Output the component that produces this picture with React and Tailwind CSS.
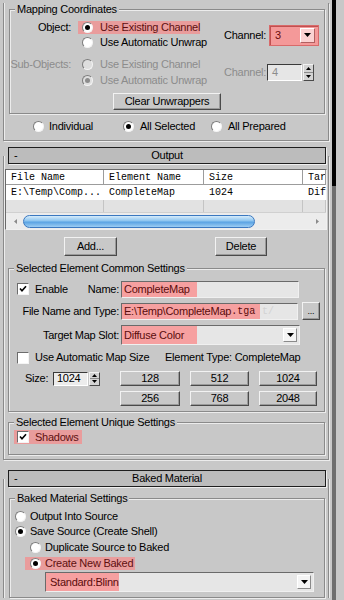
import React from "react";
import clsx from "clsx";

// 3ds Max "Render To Texture" rollouts, classic gray UI
const HL = "bg-[#e99c9c] text-[#5e1010]";
const FIELD_HL = "bg-[#f6a0a0] text-[#5a0c0c]";

const Radio = ({ checked, disabled }) => (
  <span
    className={clsx(
      "inline-flex w-[11px] h-[11px] shrink-0 items-center justify-center rounded-full border border-t-[#7c7c7c] border-l-[#7c7c7c] border-r-[#f4f4f4] border-b-[#f4f4f4]",
      disabled ? "bg-[#dedede]" : "bg-white"
    )}
  >
    {checked && (
      <span className={clsx("w-[5px] h-[5px] rounded-full", disabled ? "bg-[#8c8c8c]" : "bg-black")} />
    )}
  </span>
);

const Checkbox = ({ checked }) => (
  <span className="inline-flex w-[12px] h-[12px] shrink-0 items-center justify-center border border-t-[#6c6c6c] border-l-[#6c6c6c] border-r-[#f4f4f4] border-b-[#f4f4f4] bg-white">
    {checked && (
      <svg width="8" height="8" viewBox="0 0 8 8">
        <path d="M1 3.5 L3 5.8 L7 1.2" fill="none" stroke="#000" strokeWidth="1.6" />
      </svg>
    )}
  </span>
);

const Group = ({ title, className, children }) => (
  <fieldset
    className={clsx(
      "border border-[#8a8a8a] shadow-[inset_1px_1px_0_#ececec,1px_1px_0_#ececec]",
      className
    )}
  >
    <legend className="ml-[5px] px-[2px] bg-[#c8c8c8] leading-[13px]">{title}</legend>
    {children}
  </fieldset>
);

const Button = ({ children, className }) => (
  <div
    className={clsx(
      "flex items-center justify-center bg-[#c8c8c8] border border-t-[#f2f2f2] border-l-[#f2f2f2] border-r-[#4a4a4a] border-b-[#4a4a4a] shadow-[inset_-1px_-1px_0_#9a9a9a]",
      className
    )}
  >
    {children}
  </div>
);

const DownTri = () => (
  <svg width="7" height="4" viewBox="0 0 7 4">
    <path d="M0 0 H7 L3.5 4 Z" fill="#000" />
  </svg>
);

const SpinArrows = () => (
  <div className="ml-[1px] flex h-full w-[11px] flex-col border border-t-[#f2f2f2] border-l-[#f2f2f2] border-r-[#4a4a4a] border-b-[#4a4a4a] bg-[#d4d4d4]">
    <div className="flex flex-1 items-center justify-center border-b border-[#8a8a8a]">
      <svg width="5" height="3" viewBox="0 0 5 3"><path d="M0 3 H5 L2.5 0 Z" fill="#000" /></svg>
    </div>
    <div className="flex flex-1 items-center justify-center">
      <svg width="5" height="3" viewBox="0 0 5 3"><path d="M0 0 H5 L2.5 3 Z" fill="#000" /></svg>
    </div>
  </div>
);

const Header = ({ title }) => (
  <div className="ml-[8px] grid h-[17px] w-[318px] grid-cols-[20px_1fr_20px] items-center border border-[#1e1e1e] bg-[#bcbcbc] shadow-[1px_1px_0_#eeeeee]">
    <span className="pl-[5px]">-</span>
    <span className="text-center">{title}</span>
    <span />
  </div>
);

const mono = "font-['Liberation_Mono','Courier_New',monospace] text-[10px] tracking-normal";

const OutputTable = () => {
  const cols = ["w-[98px]", "w-[100px]", "w-[99px]", "flex-1"];
  const head = ["File Name", "Element Name", "Size", "Tar"];
  const row = ["E:\\Temp\\Comp...", "CompleteMap", "1024", "Dif"];
  return (
    <div className={clsx("ml-[1px] flex h-[61px] w-[322px] flex-col border border-t-[#6a6a6a] border-l-[#6a6a6a] border-r-[#f0f0f0] border-b-[#f0f0f0] bg-white overflow-hidden", mono)}>
      <div className="flex h-[15px]">
        {head.map((h, i) => (
          <div key={h} className={clsx(cols[i], "flex items-center overflow-hidden pl-[5px] border-r border-b border-r-[#9c9c9c] border-b-[#9c9c9c] shadow-[inset_1px_1px_0_#fff]")}>
            {h}
          </div>
        ))}
      </div>
      <div className="flex h-[15px]">
        {row.map((c, i) => (
          <div key={i} className={clsx(cols[i], "flex items-center overflow-hidden pl-[5px]")}>
            {c}
          </div>
        ))}
      </div>
      <div className="flex h-[12px] bg-[#e2e2e2]">
        {cols.map((c, i) => (
          <div key={i} className={clsx(c, "border-r border-[#c4c4c4]")} />
        ))}
      </div>
      <div className="flex h-[17px] items-center bg-[#ececec] border-t border-[#d0d0d0] px-[2px]">
        <div className="flex w-[14px] items-center justify-center">
          <svg width="3" height="5" viewBox="0 0 3 5"><path d="M3 0 V5 L0 2.5 Z" fill="#8a8a8a" /></svg>
        </div>
        <div className="ml-[1px] h-[13px] w-[232px] rounded-[7px] border border-[#3b78c0] bg-[linear-gradient(#d6ecfb,#8cc4ef_45%,#5aa3e3_55%,#9ccdf3)]" />
        <div className="flex-1" />
        <div className="flex w-[14px] items-center justify-center">
          <svg width="3" height="5" viewBox="0 0 3 5"><path d="M0 0 V5 L3 2.5 Z" fill="#8a8a8a" /></svg>
        </div>
      </div>
    </div>
  );
};

export default function App() {
  return (
    <div className="flex h-[600px] w-[344px] overflow-hidden whitespace-nowrap bg-[#c8c8c8] text-[11px] leading-[13px] tracking-[-0.25px] text-black font-['Liberation_Sans',Arial,sans-serif]">
      <div className="w-[332px] shrink-0">
        {/* Top rollout (header scrolled out of view) */}
        <div className="ml-[3px] h-[138px] w-[326px] border-x border-b border-[#8a8a8a] shadow-[inset_1px_0_0_#ececec,1px_1px_0_#ececec]">
          <Group title="Mapping Coordinates" className="ml-[5px] mt-[3px] w-[316px] pb-[3px]">
            <div className="flex items-center pt-[4px]">
              <div className="flex w-[61px] justify-end self-start leading-[15px]">Object:</div>
              <div className="ml-[7px] flex w-[146px] flex-col">
                <div className="flex h-[15px] items-center">
                  <span className={clsx("flex h-[13px] w-[122px] items-center gap-[7px] pl-[4px]", HL)}>
                    <Radio checked />
                    Use Existing Channel
                  </span>
                </div>
                <div className="flex h-[15px] items-center gap-[7px] pl-[4px]">
                  <Radio />
                  Use Automatic Unwrap
                </div>
              </div>
              <span className="w-[45px]">Channel:</span>
              <div className="flex h-[21px] w-[50px] items-center border border-[#d86a6a] bg-[#f49999] shadow-[inset_1px_1px_0_#c05050] pl-[5px] pr-[3px] text-[#6a0c0c]">
                <span className="flex-1">3</span>
                <span className="flex h-[15px] w-[15px] items-center justify-center bg-[#fbd2d2] border border-t-white border-l-white border-r-[#b06060] border-b-[#b06060]">
                  <DownTri />
                </span>
              </div>
            </div>

            <div className="mt-[6px] flex items-center text-[#8c8c8c]">
              <div className="flex w-[61px] justify-end self-start leading-[16px]">Sub-Objects:</div>
              <div className="ml-[7px] flex w-[146px] flex-col">
                <div className="flex h-[16px] items-center gap-[7px] pl-[4px]">
                  <Radio disabled />
                  Use Existing Channel
                </div>
                <div className="flex h-[16px] items-center gap-[7px] pl-[4px]">
                  <Radio disabled checked />
                  Use Automatic Unwrap
                </div>
              </div>
              <span className="w-[43px]">Channel:</span>
              <div className="flex h-[17px] items-center">
                <div className="flex h-full w-[35px] items-center border border-t-[#3a3a3a] border-l-[#3a3a3a] border-r-white border-b-white bg-[#e6e6e6] pl-[4px]">4</div>
                <SpinArrows />
              </div>
            </div>

            <Button className="mx-auto mt-[5px] h-[17px] w-[108px]">Clear Unwrappers</Button>
          </Group>

          <div className="mt-[5px] flex h-[15px] items-center pl-[29px]">
            <div className="flex w-[90px] items-center gap-[5px]"><Radio />Individual</div>
            <div className="flex w-[88px] items-center gap-[6px]"><Radio checked />All Selected</div>
            <div className="flex items-center gap-[6px]"><Radio />All Prepared</div>
          </div>
        </div>

        {/* Output rollout */}
        <div className="mt-[6px]">
          <Header title="Output" />
          <div className="-mt-[8px] ml-[3px] w-[326px] border-x border-b border-[#8a8a8a] pt-[13px] pb-[4px] shadow-[inset_1px_0_0_#ececec,1px_1px_0_#ececec]">
            <OutputTable />

            <div className="mt-[7px] flex">
              <Button className="ml-[60px] h-[19px] w-[53px]">Add...</Button>
              <Button className="ml-[98px] h-[19px] w-[52px]">Delete</Button>
            </div>

            <Group title="Selected Element Common Settings" className="ml-[4px] mt-[6px] w-[317px] pb-[5px]">
              <div className="mt-[5px] flex h-[18px] items-center">
                <div className="flex w-[112px] items-center pl-[8px]">
                  <Checkbox checked />
                  <span className="ml-[6px]">Enable</span>
                  <span className="ml-auto pr-[2px]">Name:</span>
                </div>
                <div className="flex h-[17px] w-[178px] border border-t-[#6a6a6a] border-l-[#6a6a6a] border-r-[#f0f0f0] border-b-[#f0f0f0] bg-[#e6e6e6]">
                  <span className={clsx("flex w-[75px] items-center pl-[2px]", FIELD_HL)}>CompleteMap</span>
                </div>
              </div>

              <div className="mt-[4px] flex h-[18px] items-center">
                <div className="w-[112px] pr-[2px] text-right">File Name and Type:</div>
                <div className="flex h-[17px] w-[177px] items-center border border-t-[#6a6a6a] border-l-[#6a6a6a] border-r-[#f0f0f0] border-b-[#f0f0f0] bg-[#e6e6e6]">
                  <span className={clsx("flex h-full w-[138px] items-center pl-[2px]", FIELD_HL)}>
                    E:\Temp\CompleteMap<span className={mono}>.tga</span>
                  </span>
                  <span className={clsx(mono, "text-[#d2d2d2] pl-[2px]")}>t/</span>
                </div>
                <Button className="ml-[4px] h-[18px] w-[18px] items-end pb-[3px] text-[9px] leading-[9px]">...</Button>
              </div>

              <div className="mt-[5px] flex h-[20px] items-center">
                <div className="w-[112px] pr-[2px] text-right">Target Map Slot:</div>
                <div className="flex h-[20px] w-[179px] items-center border border-t-[#6a6a6a] border-l-[#6a6a6a] border-r-[#f0f0f0] border-b-[#f0f0f0] bg-[#e6e6e6] pr-[2px]">
                  <span className={clsx("flex h-full w-[75px] items-center pl-[2px]", FIELD_HL)}>Diffuse Color</span>
                  <span className="flex-1" />
                  <span className="flex h-[14px] w-[14px] items-center justify-center border border-t-white border-l-white border-r-[#8a8a8a] border-b-[#8a8a8a] bg-[#f4f4f4]">
                    <DownTri />
                  </span>
                </div>
              </div>

              <div className="mt-[5px] flex h-[15px] items-center">
                <div className="flex w-[156px] items-center pl-[8px]">
                  <Checkbox />
                  <span className="ml-[6px]">Use Automatic Map Size</span>
                </div>
                <span>Element Type: CompleteMap</span>
              </div>

              <div className="mt-[6px] flex">
                <div className="flex h-[15px] w-[111px] items-center">
                  <span className="ml-[16px] w-[28px]">Size:</span>
                  <div className="flex h-[14px] items-center">
                    <div className="flex h-full w-[35px] items-center border border-t-[#3a3a3a] border-l-[#3a3a3a] border-r-white border-b-white bg-[#ececec] pl-[3px]">1024</div>
                    <SpinArrows />
                  </div>
                </div>
                <div className="grid grid-cols-[60px_59px_58px] gap-x-[10px] gap-y-[5px]">
                  {["128", "512", "1024", "256", "768", "2048"].map((s) => (
                    <Button key={s} className="h-[15px]">{s}</Button>
                  ))}
                </div>
              </div>
            </Group>

            <Group title="Selected Element Unique Settings" className="ml-[4px] mt-[4px] w-[317px] pb-[10px]">
              <div className={clsx("ml-[5px] mt-[1px] flex h-[14px] w-[68px] items-center pl-[3px]", HL)}>
                <Checkbox checked />
                <span className="ml-[6px]">Shadows</span>
              </div>
            </Group>
          </div>
        </div>

        {/* Baked Material rollout */}
        <div className="mt-[10px]">
          <Header title="Baked Material" />
          <div className="-mt-[8px] ml-[3px] w-[326px] border-x border-[#8a8a8a] pt-[13px] shadow-[inset_1px_0_0_#ececec,1px_0_0_#ececec]">
            <Group title="Baked Material Settings" className="ml-[5px] w-[316px] pb-[5px]">
              <div className="mt-[4px] flex h-[15px] items-center gap-[4px] pl-[5px]"><Radio />Output Into Source</div>
              <div className="flex h-[15px] items-center gap-[4px] pl-[5px]"><Radio checked />Save Source (Create Shell)</div>
              <div className="mt-[1px] flex h-[15px] items-center gap-[4px] pl-[20px]"><Radio />Duplicate Source to Baked</div>
              <div className={clsx("ml-[15px] mt-[2px] flex h-[13px] w-[110px] items-center gap-[4px] pl-[5px]", HL)}>
                <Radio checked />
                Create New Baked
              </div>
              <div className="ml-[35px] mt-[2px] flex h-[20px] w-[269px] items-center border border-t-[#6a6a6a] border-l-[#6a6a6a] border-r-[#f0f0f0] border-b-[#f0f0f0] bg-[#e6e6e6] pr-[2px]">
                <span className={clsx("flex h-full w-[73px] items-center pl-[4px]", FIELD_HL)}>Standard:Blinn</span>
                <span className="flex-1" />
                <span className="flex h-[14px] w-[14px] items-center justify-center border border-t-white border-l-white border-r-[#8a8a8a] border-b-[#8a8a8a] bg-[#f4f4f4]">
                  <DownTri />
                </span>
              </div>
            </Group>
          </div>
        </div>
      </div>

      {/* panel scrollbar strip */}
      <div className="flex w-[4px] shrink-0 flex-col">
        <div className="h-[186px] bg-black" />
        <div className="flex-1 bg-[#6e6e6e]" />
      </div>
      <div className="flex-1" />
    </div>
  );
}
